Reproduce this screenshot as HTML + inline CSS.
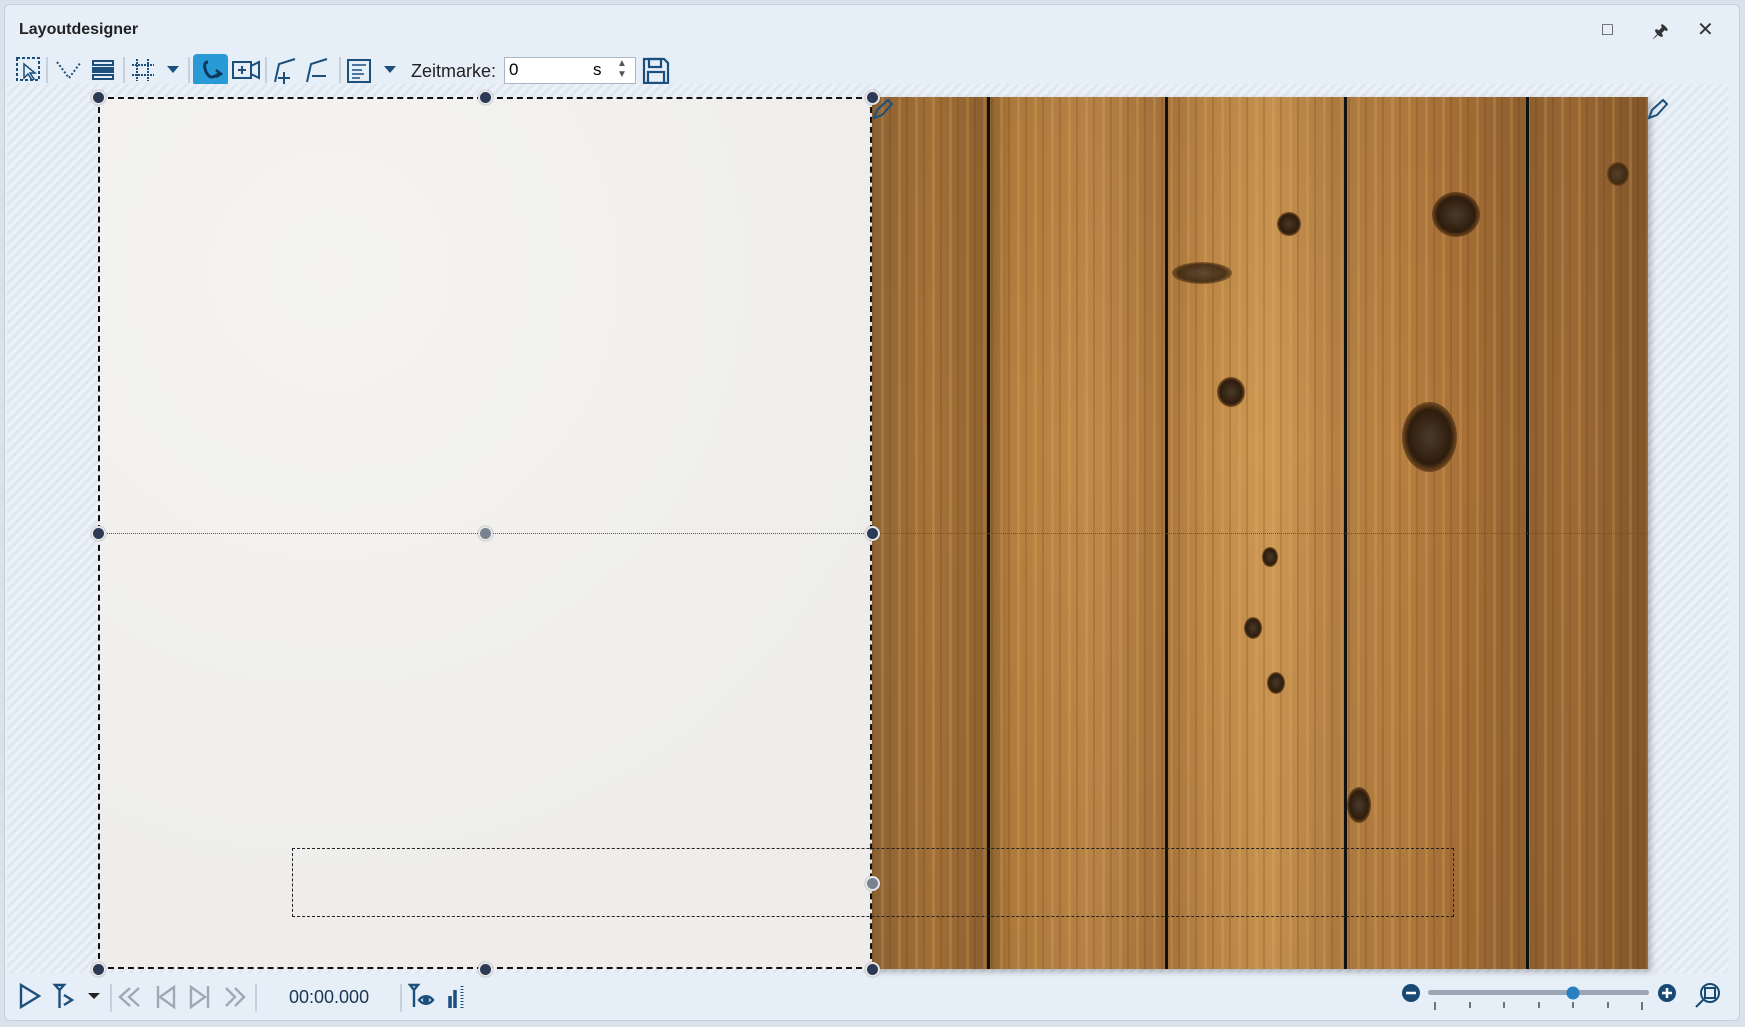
<!DOCTYPE html>
<html><head><meta charset="utf-8"><style>
*{margin:0;padding:0;box-sizing:border-box}
body{width:1745px;height:1027px;background:#d9e1ea;font-family:"Liberation Sans",sans-serif;overflow:hidden;position:relative}
#win{position:absolute;left:4px;top:4px;width:1736px;height:1017px;background:#e6eef8;border:1px solid #c6d0dc;border-radius:6px}
.title{position:absolute;left:14px;top:16px;font-size:16px;font-weight:bold;color:#222}
.ctl{position:absolute;top:14px;font-size:18px;color:#333}
#canvas{position:absolute;left:7px;top:84px;width:1722px;height:889px;background:repeating-linear-gradient(135deg,#dfe7f0 0 3px,#ebf1f8 3px 7px)}
#paper{position:absolute;left:98px;top:97px;width:774px;height:872px;background:radial-gradient(circle at 30% 20%,#f5f4f2,#eeedeb 70%);}
#wood{position:absolute;left:872px;top:97px;width:776px;height:872px;box-shadow:3px 3px 6px rgba(0,0,0,.25);
background:
linear-gradient(90deg,transparent 0 115px,#111 115px 118px,transparent 118px 293px,#111 293px 296px,transparent 296px 472px,#111 472px 475px,transparent 475px 654px,#111 654px 657px,transparent 657px),
repeating-linear-gradient(90deg,rgba(90,50,15,.18) 0 2px,transparent 2px 9px,rgba(235,180,100,.22) 9px 12px,transparent 12px 17px),
linear-gradient(180deg,rgba(120,80,40,.15),rgba(0,0,0,0) 40%,rgba(120,80,40,.15)),
linear-gradient(90deg,#8f6434 0,#a8743a 60px,#8e6230 115px,#b5803f 140px,#c08a4a 220px,#a9763d 293px,#c08a48 330px,#cf9a55 400px,#b27e42 472px,#b98242 520px,#a46e36 600px,#8f6130 654px,#9e6b36 700px,#82562a 776px);}
.knot{position:absolute;border-radius:50%;background:radial-gradient(#4a3a2a,#2e1d0c 55%,rgba(110,65,25,.6) 75%,rgba(90,52,18,0) 100%)}
.h{position:absolute;width:15px;height:15px;margin:-7.5px 0 0 -7.5px;border-radius:50%;background:#2d3a55;border:2px solid #e8e8e8;box-shadow:0 0 1px #555}
.h.g{background:#7a8290}
svg{position:absolute}
</style></head><body>
<div id="win">
<div class="title">Layoutdesigner</div>
<div class="ctl" style="left:1597px;">□</div>
<div class="ctl" style="left:1647px;">🖈</div>
<div class="ctl" style="left:1692px;font-size:20px;top:12px">✕</div>
</div>
<svg style="left:0;top:52px" width="700" height="36" stroke="#1c4f7c" fill="none" stroke-width="2">
<rect x="17" y="6" width="22" height="22" stroke-dasharray="3 2"/><path d="M24 12l0 14 4-4 4 6 2-1-4-6 5 0z" stroke-width="1.5"/>
<path d="M47 5v26" stroke="#a8b4c4" stroke-width="1"/>
<path d="M57 10l12 16 12-16" stroke-dasharray="2 2"/>
<rect x="93" y="9" width="20" height="4" /><rect x="93" y="16" width="20" height="4" fill="#1c4f7c"/><rect x="93" y="23" width="20" height="4"/>
<path d="M124 5v26" stroke="#a8b4c4" stroke-width="1"/>
<path d="M137 7v22M148 7v22M132 13h22M132 23h22" stroke-dasharray="2 1"/>
<path d="M167 14h12l-6 7z" fill="#1c4f7c" stroke="none"/>
<path d="M189 5v26" stroke="#a8b4c4" stroke-width="1"/>
<rect x="193" y="2" width="35" height="32" rx="4" fill="#2a9ad6" stroke="none"/>
<path d="M208 10c-6 0-3 10 1 14s10-4 12-2" stroke="#0c3a5e" stroke-width="3"/><path d="M216 18l5 4-5 3" stroke="#0c3a5e" stroke-width="2.5"/>
<rect x="233" y="10" width="18" height="16"/><path d="M251 14l8-4v16l-8-4M242 14v8M238 18h8"/>
<path d="M266 5v26" stroke="#a8b4c4" stroke-width="1"/>
<path d="M275 30l4-18 16-5M284 20v12M278 26h12"/>
<path d="M307 30l4-18 16-5M312 24h14"/>
<path d="M340 5v26" stroke="#a8b4c4" stroke-width="1"/>
<rect x="348" y="8" width="22" height="22"/><path d="M352 13h14M352 18h10M352 22h12M352 26h8" stroke-width="1.5"/>
<path d="M384 14h12l-6 7z" fill="#1c4f7c" stroke="none"/>
</svg>
<div style="position:absolute;left:411px;top:61px;font-size:18px;color:#222">Zeitmarke:</div>
<div style="position:absolute;left:504px;top:57px;width:132px;height:27px;background:#fff;border:1px solid #aab6c4;font-size:17px;padding:2px 4px">0<span style="position:absolute;left:88px">s</span><span style="position:absolute;left:112px;top:0;font-size:10px;color:#555;line-height:11px">▲<br>▼</span></div>
<svg style="left:642px;top:57px" width="28" height="28" stroke="#1c4f7c" fill="none" stroke-width="2.2"><path d="M2 2h20l4 4v20H2z"/><rect x="7" y="2" width="12" height="8"/><rect x="6" y="15" width="16" height="11"/></svg>
<div id="canvas"></div>
<div id="paper"></div>
<div id="wood">
<div class="knot" style="left:560px;top:95px;width:48px;height:45px"></div>
<div class="knot" style="left:530px;top:305px;width:55px;height:70px"></div>
<div class="knot" style="left:405px;top:115px;width:24px;height:24px"></div>
<div class="knot" style="left:300px;top:165px;width:60px;height:22px;opacity:.8"></div>
<div class="knot" style="left:345px;top:280px;width:28px;height:30px"></div>
<div class="knot" style="left:390px;top:450px;width:16px;height:20px"></div>
<div class="knot" style="left:372px;top:520px;width:18px;height:22px"></div>
<div class="knot" style="left:395px;top:575px;width:18px;height:22px"></div>
<div class="knot" style="left:475px;top:690px;width:24px;height:36px"></div>
<div class="knot" style="left:735px;top:65px;width:22px;height:24px;opacity:.8"></div>
</div>
<div style="position:absolute;left:98px;top:97px;width:774px;height:872px;border:2px dashed #111"></div>
<div style="position:absolute;left:98px;top:533px;width:1550px;border-top:1px dotted #555"></div>
<div style="position:absolute;left:292px;top:848px;width:1162px;height:69px;border:1px dashed #222"></div>
<div class="h" style="left:98px;top:97px"></div><div class="h" style="left:485px;top:97px"></div><div class="h" style="left:872px;top:97px"></div>
<div class="h" style="left:98px;top:533px"></div><div class="h g" style="left:485px;top:533px"></div><div class="h" style="left:872px;top:533px"></div>
<div class="h" style="left:98px;top:969px"></div><div class="h" style="left:485px;top:969px"></div><div class="h" style="left:872px;top:969px"></div>
<div class="h g" style="left:872px;top:883px"></div>
<svg style="left:872px;top:98px" width="22" height="22" stroke="#1c4f7c" fill="none" stroke-width="2"><path d="M2 20l3-8 11-10 4 4-10 11z"/></svg>
<svg style="left:1647px;top:98px" width="22" height="22" stroke="#1c4f7c" fill="none" stroke-width="2"><path d="M2 20l3-8 11-10 4 4-10 11z"/></svg>
<svg style="left:0;top:980px" width="480" height="36" fill="none" stroke="#1c4f7c" stroke-width="2.4">
<path d="M21 5l18 11-18 11z"/>
<path d="M55 5h9l-4.5 5zM59.5 10v18M64 15l8 5-8 5" />
<path d="M88 13h12l-6 6z" fill="#222" stroke="none"/>
<path d="M111 4v28M256 4v28M401 4v28" stroke="#a8b4c4" stroke-width="1"/>
<g stroke="#a0a8b4"><path d="M130 8l-10 9 10 9M139 8l-10 9 10 9"/><path d="M158 6v22M174 7l-14 10 14 10z"/><path d="M208 6v22M191 7l14 10-14 10z"/><path d="M226 8l9 9-9 9M235 8l9 9-9 9"/></g>
<path d="M410 5h8l-4 5zM414 10v17M419 20c4-5 10-5 14 0c-4 5-10 5-14 0z"/><circle cx="426" cy="20" r="2" fill="#1c4f7c"/>
<path d="M450 16v12M455 10v18" stroke-width="3.5"/><path d="M462 6v22" stroke-dasharray="1 2" stroke-width="3"/>
</svg>
<div style="position:absolute;left:289px;top:987px;font-size:18px;color:#1c3550">00:00.000</div>
<svg style="left:1395px;top:980px" width="340" height="36">
<circle cx="16" cy="13" r="9" fill="#174a74"/><path d="M11 13h10" stroke="#fff" stroke-width="2.5"/>
<rect x="33" y="10" width="221" height="5" rx="2.5" fill="#9aa6b4"/>
<circle cx="178" cy="13" r="6.5" fill="#2a7fc0"/>
<g stroke="#333" stroke-width="1.3"><path d="M40 22v8M75 22v6M109 22v6M144 22v6M178 22v6M213 22v6M247 22v8"/></g>
<circle cx="272" cy="13" r="9" fill="#174a74"/><path d="M267 13h10M272 8v10" stroke="#fff" stroke-width="2.5"/>
<g fill="none" stroke="#174a74" stroke-width="2"><circle cx="315" cy="13" r="9"/><rect x="310" y="8" width="10" height="10"/><path d="M308 20l-7 7"/></g>
</svg>
</body></html>
